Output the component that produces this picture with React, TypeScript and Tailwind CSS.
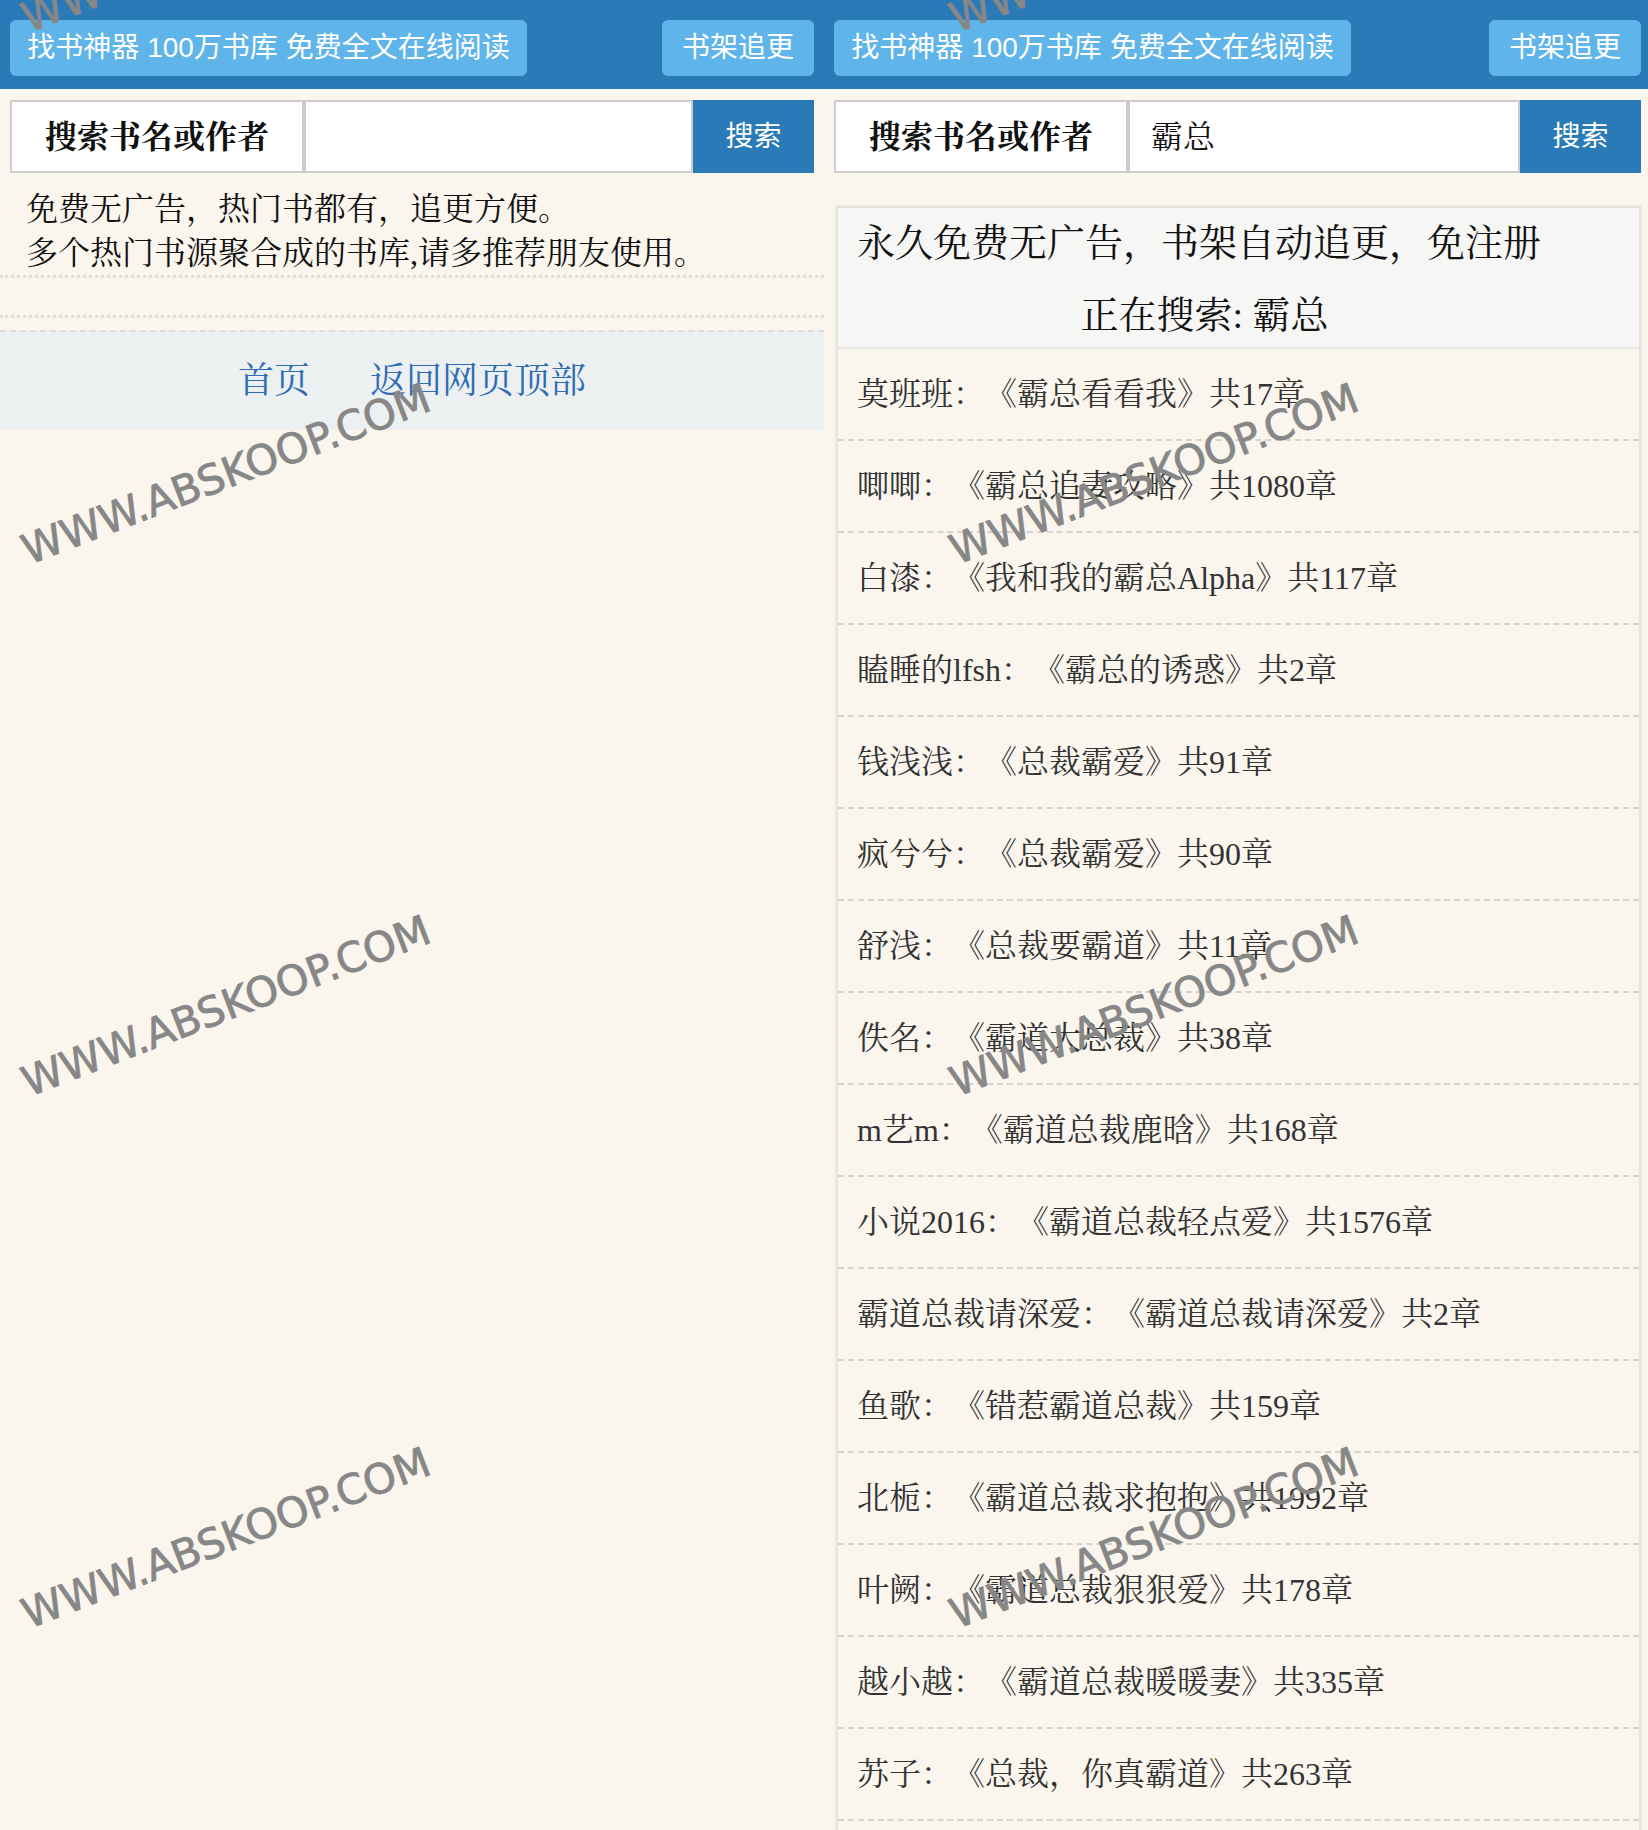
import React from "react";

const serif = "font-['Liberation_Serif','Noto_Serif_CJK_SC','Noto_Sans_CJK_SC',serif] [text-spacing-trim:space-all]";
const sans = "font-['Liberation_Sans','Noto_Sans_CJK_SC',sans-serif]";

const rows: [string, string, string][] = [
  ["莫班班", "霸总看看我", "17"],
  ["唧唧", "霸总追妻攻略", "1080"],
  ["白漆", "我和我的霸总Alpha", "117"],
  ["瞌睡的lfsh", "霸总的诱惑", "2"],
  ["钱浅浅", "总裁霸爱", "91"],
  ["疯兮兮", "总裁霸爱", "90"],
  ["舒浅", "总裁要霸道", "11"],
  ["佚名", "霸道大总裁", "38"],
  ["m艺m", "霸道总裁鹿晗", "168"],
  ["小说2016", "霸道总裁轻点爱", "1576"],
  ["霸道总裁请深爱", "霸道总裁请深爱", "2"],
  ["鱼歌", "错惹霸道总裁", "159"],
  ["北栀", "霸道总裁求抱抱", "1992"],
  ["叶阙", "霸道总裁狠狠爱", "178"],
  ["越小越", "霸道总裁暖暖妻", "335"],
  ["苏子", "总裁，你真霸道", "263"],
];

function Header({ right }: { right?: boolean }) {
  return (
    <div
      className={`shrink-0 h-[93px] bg-[#2a7ab8] border-b-[4px] border-[#fcfaf5] flex items-start pt-[20px] pl-[10px] ${
        right ? "pr-[7px]" : "pr-[10px]"
      }`}
    >
      <div
        className={`w-[517px] h-[56px] rounded-[6px] bg-[#5fb4ea] text-white text-[28px] ${sans} flex items-center justify-center whitespace-nowrap`}
      >
        找书神器 100万书库 免费全文在线阅读
      </div>
      <div
        className={`ml-auto w-[152px] h-[56px] rounded-[6px] bg-[#5fb4ea] text-white text-[28px] ${sans} flex items-center justify-center whitespace-nowrap`}
      >
        书架追更
      </div>
    </div>
  );
}

function SearchBar({ value, right }: { value: string; right?: boolean }) {
  return (
    <div className={`shrink-0 mt-[7px] ml-[10px] ${right ? "mr-[7px]" : "mr-[10px]"} h-[73px] flex`}>
      <div
        className={`w-[294px] shrink-0 bg-white border-2 border-[#cdcdcd] flex items-center justify-center text-[32px] font-bold text-[#111] ${serif}`}
      >
        搜索书名或作者
      </div>
      <div
        className={`flex-1 bg-white border-2 border-[#cdcdcd] flex items-center pl-[21px] text-[32px] text-[#111] ${serif}`}
      >
        {value}
      </div>
      <div
        className={`w-[121px] shrink-0 bg-[#2a7ab8] text-white text-[28px] ${sans} flex items-center justify-center`}
      >
        搜索
      </div>
    </div>
  );
}

function Watermark({ x, y }: { x: string; y: string }) {
  return (
    <div
      className={`absolute ${x} ${y} -translate-x-1/2 -translate-y-1/2 -rotate-[21deg] whitespace-nowrap text-[41.5px] leading-none text-[#878787] [-webkit-text-stroke:0.8px_#878787] font-['DejaVu_Sans',sans-serif] pointer-events-none`}
    >
      WWW.ABSKOOP.COM
    </div>
  );
}

export default function App() {
  return (
    <div className="relative w-[1648px] h-[1830px] overflow-hidden bg-[#faf6ee] flex">
      {/* Left panel */}
      <div className="w-[824px] shrink-0 flex flex-col">
        <Header />
        <SearchBar value="" />
        <div
          className={`shrink-0 pt-[14px] pl-[26px] text-[32px] leading-[44px] text-[#111] ${serif} border-b-[3px] border-dotted border-[#e2ded6]`}
        >
          <div>免费无广告，热门书都有，追更方便。</div>
          <div>多个热门书源聚合成的书库,请多推荐朋友使用。</div>
        </div>
        <div className="shrink-0 h-[40px] border-b-[3px] border-dotted border-[#e2ded6]" />
        <div
          className={`shrink-0 mt-[12px] h-[100px] bg-[#edf0f0] border-t-2 border-dashed border-[#dfe0df] flex items-center justify-center gap-[60px] text-[36px] text-[#2e6db4] ${serif}`}
        >
          <span>首页</span>
          <span>返回网页顶部</span>
        </div>
      </div>

      {/* Right panel */}
      <div className="flex-1 flex flex-col">
        <Header right />
        <SearchBar value="霸总" right />
        <div className="shrink-0 mt-[33px] ml-[12px] mr-[7px] border-2 border-[#e6e3de] shadow-[0_0_3px_rgba(0,0,0,0.08)] pb-[60px]">
          <div
            className={`bg-[#f6f6f5] border-b-2 border-[#e6e6e4] pt-[7px] pb-[3px] text-[38px] leading-[57px] text-[#111] ${serif}`}
          >
            <div className="pl-[19px] whitespace-nowrap">永久免费无广告，书架自动追更，免注册</div>
            <div className="mt-[15px] text-center pr-[68px]">正在搜索: 霸总</div>
          </div>
          {rows.map(([a, t, n], i) => (
            <div
              key={i}
              className={`h-[92px] border-b-2 border-dashed border-[#d6d3ce] flex items-center pl-[19px] text-[32px] text-[#333] whitespace-nowrap ${serif}`}
            >
              {a}：《{t}》共{n}章
            </div>
          ))}
        </div>
      </div>

      {/* Watermarks */}
      <Watermark x="left-[226px]" y="top-[-58px]" />
      <Watermark x="left-[226px]" y="top-[474px]" />
      <Watermark x="left-[226px]" y="top-[1006px]" />
      <Watermark x="left-[226px]" y="top-[1538px]" />
      <Watermark x="left-[1154px]" y="top-[-58px]" />
      <Watermark x="left-[1154px]" y="top-[474px]" />
      <Watermark x="left-[1154px]" y="top-[1006px]" />
      <Watermark x="left-[1154px]" y="top-[1538px]" />
    </div>
  );
}
